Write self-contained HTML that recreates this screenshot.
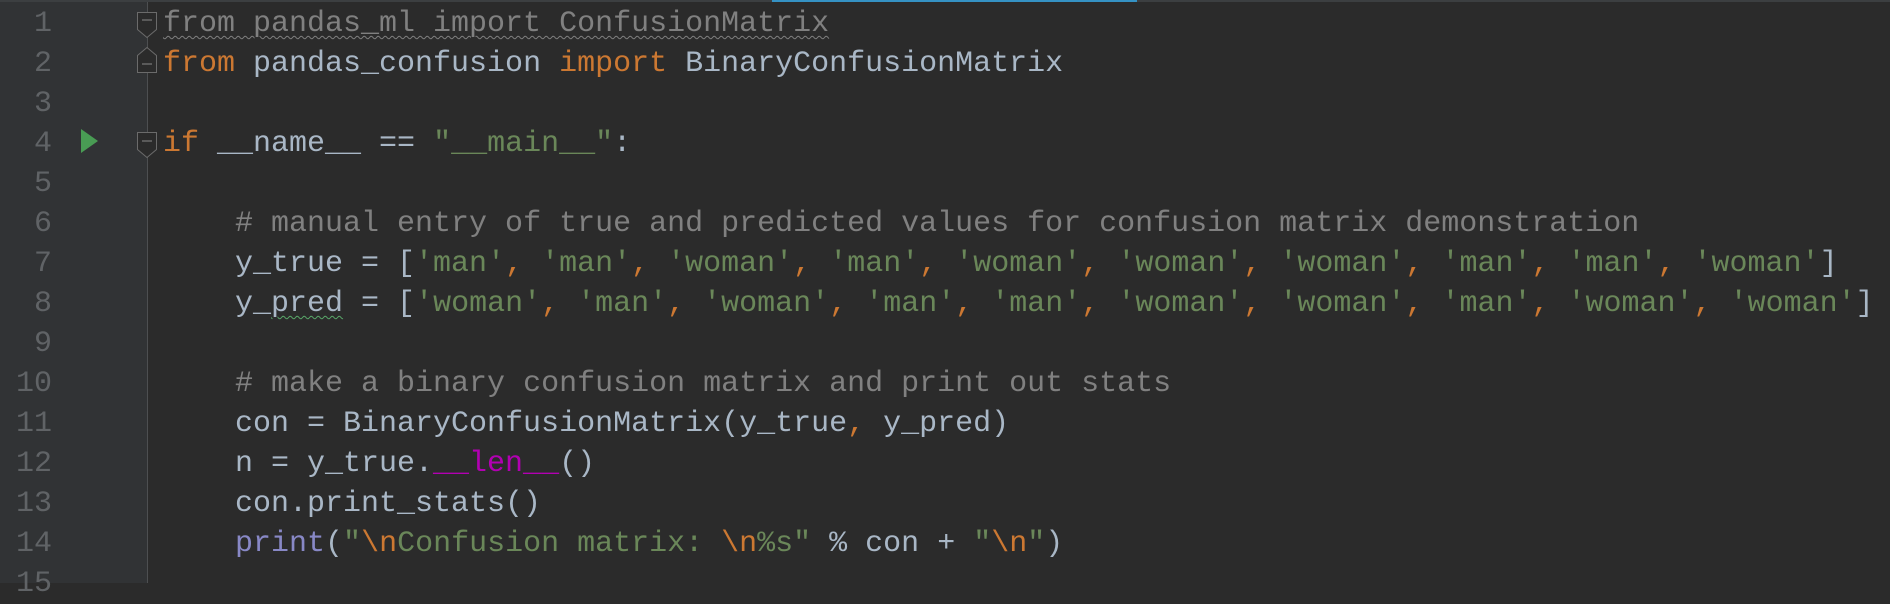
<!DOCTYPE html>
<html><head><meta charset="utf-8"><style>
html,body{margin:0;padding:0;background:#2b2b2b;width:1890px;height:583px;overflow:hidden}
#gut{position:absolute;left:0;top:0;width:147px;height:583px;background:#313335;border-right:1px solid #4d4f51}
#top{position:absolute;left:0;top:0;width:1890px;height:2px;background:#3c3f41}
#blue{position:absolute;left:772px;top:0;width:365px;height:2px;background:#3592c4}
.ln,.code{position:absolute;top:4px;font-family:"Liberation Mono",monospace;font-size:30px;line-height:40px;white-space:pre}
.ln{left:0;width:52px;text-align:right;color:#606366}
.code{left:163px;color:#a9b7c6}
.k{color:#cc7832}.s{color:#6a8759}.c{color:#808080}.b{color:#8888c6}.m{color:#b200b2}
.u{color:#808080;text-decoration:underline wavy #808080;text-decoration-thickness:1px;text-underline-offset:4px}
.g{text-decoration:underline wavy #59a869;text-decoration-thickness:1px;text-underline-offset:4px}
svg{position:absolute;left:0;top:0}
</style></head><body>
<div id="gut"></div><div id="top"></div><div id="blue"></div>
<div class="ln">1
2
3
4
5
6
7
8
9
10
11
12
13
14
15</div>
<svg width="200" height="583">
<polygon points="81,129 98,141 81,153" fill="#499c54"/>
<path d="M137.5,12.5h19v17l-9.5,8l-9.5,-8z" fill="#2b2b2b" stroke="#6b6b6b"/>
<line x1="142" y1="20" x2="152" y2="20" stroke="#8a8a8a"/>
<path d="M137.5,72.5h19v-17l-9.5,-8l-9.5,8z" fill="#2b2b2b" stroke="#6b6b6b"/>
<line x1="142" y1="64" x2="152" y2="64" stroke="#8a8a8a"/>
<path d="M137.5,132.5h19v17l-9.5,8l-9.5,-8z" fill="#2b2b2b" stroke="#6b6b6b"/>
<line x1="142" y1="141" x2="152" y2="141" stroke="#8a8a8a"/>
</svg>
<div class="code"><span class="u">from pandas_ml import ConfusionMatrix</span>
<span class="k">from</span> pandas_confusion <span class="k">import</span> BinaryConfusionMatrix

<span class="k">if</span> __name__ == <span class="s">"__main__"</span>:

    <span class="c"># manual entry of true and predicted values for confusion matrix demonstration</span>
    y_true = [<span class="s">'man'</span><span class="k">,</span> <span class="s">'man'</span><span class="k">,</span> <span class="s">'woman'</span><span class="k">,</span> <span class="s">'man'</span><span class="k">,</span> <span class="s">'woman'</span><span class="k">,</span> <span class="s">'woman'</span><span class="k">,</span> <span class="s">'woman'</span><span class="k">,</span> <span class="s">'man'</span><span class="k">,</span> <span class="s">'man'</span><span class="k">,</span> <span class="s">'woman'</span>]
    y_<span class="g">pred</span> = [<span class="s">'woman'</span><span class="k">,</span> <span class="s">'man'</span><span class="k">,</span> <span class="s">'woman'</span><span class="k">,</span> <span class="s">'man'</span><span class="k">,</span> <span class="s">'man'</span><span class="k">,</span> <span class="s">'woman'</span><span class="k">,</span> <span class="s">'woman'</span><span class="k">,</span> <span class="s">'man'</span><span class="k">,</span> <span class="s">'woman'</span><span class="k">,</span> <span class="s">'woman'</span>]

    <span class="c"># make a binary confusion matrix and print out stats</span>
    con = BinaryConfusionMatrix(y_true<span class="k">,</span> y_pred)
    n = y_true.<span class="m">__len__</span>()
    con.print_stats()
    <span class="b">print</span>(<span class="s">"</span><span class="k">\n</span><span class="s">Confusion matrix: </span><span class="k">\n</span><span class="s">%s"</span> % con + <span class="s">"</span><span class="k">\n</span><span class="s">"</span>)
</div>
</body></html>
